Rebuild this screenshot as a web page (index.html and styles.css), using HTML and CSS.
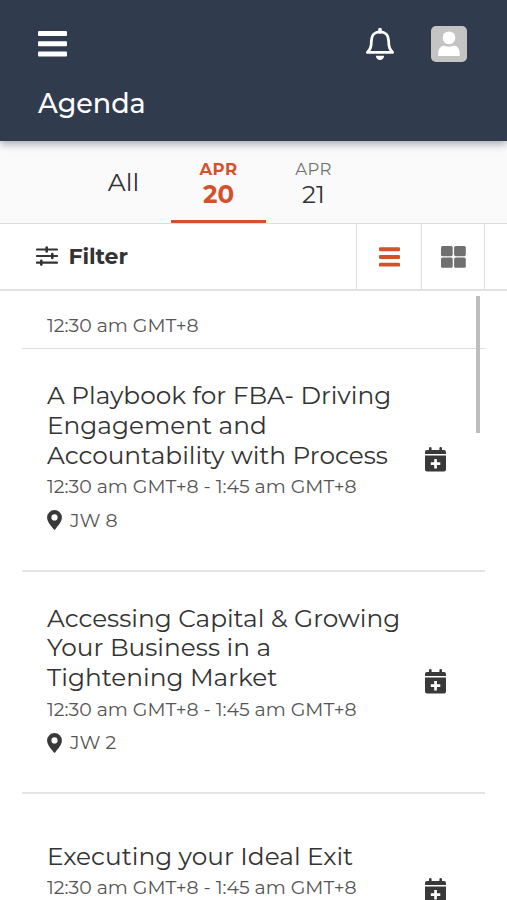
FILE: index.html
```html
<!DOCTYPE html>
<html lang="en">
<head>
    <meta charset="UTF-8">
    <meta name="viewport" content="width=device-width, initial-scale=1.0">
    <title>Agenda</title>
    <link rel="stylesheet" href="styles.css">
</head>
<body>

<header class="header">
    <div class="header-bar">
        <svg class="menu-icon" width="29" height="26" viewBox="0 0 29 26" fill="#fff">
            <rect width="29" height="5" rx="1"/>
            <rect y="10.3" width="29" height="5" rx="1"/>
            <rect y="20.6" width="29" height="5" rx="1"/>
        </svg>
        <svg class="bell-icon" width="30" height="34" viewBox="0 0 30 34">
            <path d="M15 4.8C9.6 4.8 6.4 8.6 6.4 13.6C6.4 20.5 5 22.6 2.4 25.4H27.6C25 22.6 23.6 20.5 23.6 13.6C23.6 8.6 20.4 4.8 15 4.8Z" fill="none" stroke="#fff" stroke-width="2.8" stroke-linejoin="round"/>
            <path d="M15 2.5V5" stroke="#fff" stroke-width="3.6" stroke-linecap="round"/>
            <path d="M10.8 28.7H19.2C19 31.3 17.2 33 15 33S11 31.3 10.8 28.7Z" fill="#fff"/>
        </svg>
        <svg class="avatar" width="36" height="36" viewBox="0 0 36 36">
            <rect width="36" height="36" rx="5" fill="#c4c4c4"/>
            <circle cx="18" cy="11.8" r="6.4" fill="#fff"/>
            <path d="M7.3 30V27C7.3 22.5 10 19.8 13.5 19.8Q18 21.6 22.5 19.8C26 19.8 28.7 22.5 28.7 27V30Z" fill="#fff"/>
        </svg>
    </div>
    <h1>Agenda</h1>
</header>

<nav class="tabs">
    <div class="tab all">All</div>
    <div class="tab active"><span class="month">APR</span><span class="date">20</span></div>
    <div class="tab"><span class="month">APR</span><span class="date">21</span></div>
</nav>

<div class="toolbar">
    <div class="filter">
        <svg width="22" height="20" viewBox="0 0 22 20" fill="none" stroke="#333" stroke-width="2.2" stroke-linecap="round">
            <path d="M1 3.5H21M1 10H21M1 16.7H21"/>
            <path d="M10.7 1.6V5.4M16.3 8.1V11.9M5.3 14.8V18.6" stroke-width="2.6"/>
        </svg>
        <span>Filter</span>
    </div>
    <div class="view list-view">
        <svg width="21" height="20" viewBox="0 0 21 20" fill="#d3522d">
            <rect y="0.3" width="21" height="3.9" rx="1.2"/>
            <rect y="8" width="21" height="3.9" rx="1.2"/>
            <rect y="15.7" width="21" height="3.9" rx="1.2"/>
        </svg>
    </div>
    <div class="view grid-view">
        <svg width="25" height="22" viewBox="0 0 25 22" fill="#707070">
            <rect width="11.7" height="10.2" rx="1.6"/>
            <rect x="13.1" width="11.7" height="10.2" rx="1.6"/>
            <rect y="11.6" width="11.7" height="10.2" rx="1.6"/>
            <rect x="13.1" y="11.6" width="11.7" height="10.2" rx="1.6"/>
        </svg>
    </div>
</div>

<svg class="symbols" width="0" height="0">
    <symbol id="pin" viewBox="0 0 15 20">
        <path fill-rule="evenodd" d="M7.5 0A7.4 7.4 0 0 0 .1 7.4C.1 11.7 3.6 15.2 6.7 19.2Q7.5 20.2 8.3 19.2C11.4 15.2 14.9 11.7 14.9 7.4A7.4 7.4 0 0 0 7.5 0ZM7.5 4.3A3.1 3.1 0 1 1 7.5 10.5A3.1 3.1 0 1 1 7.5 4.3Z"/>
    </symbol>
    <symbol id="calendar-plus" viewBox="0 0 21 25">
        <path d="M0 7V5Q0 3 2 3H4V1.2Q4 0 5.3 0T6.6 1.2V3H14.4V1.2Q14.4 0 15.7 0T17 1.2V3H19Q21 3 21 5V7Z"/>
        <path fill-rule="evenodd" d="M0 8.6H21V22.5Q21 24.6 19 24.6H2Q0 24.6 0 22.5ZM9.2 12V15.3H5.8V18H9.2V21.4H11.9V18H15.3V15.3H11.9V12Z"/>
    </symbol>
</svg>

<main class="agenda">
    <div class="scrollbar"></div>
    <div class="time-heading">12:30 am GMT+8</div>

    <div class="session">
        <div class="details">
            <h2>A Playbook for FBA- Driving<br>Engagement and<br>Accountability with Process</h2>
            <div class="time">12:30 am GMT+8 - 1:45 am GMT+8</div>
            <div class="room"><svg width="15" height="20"><use href="#pin"/></svg>JW 8</div>
        </div>
        <svg class="add" width="21" height="25"><use href="#calendar-plus"/></svg>
    </div>

    <div class="session">
        <div class="details">
            <h2>Accessing Capital &amp; Growing<br>Your Business in a<br>Tightening Market</h2>
            <div class="time">12:30 am GMT+8 - 1:45 am GMT+8</div>
            <div class="room"><svg width="15" height="20"><use href="#pin"/></svg>JW 2</div>
        </div>
        <svg class="add" width="21" height="25"><use href="#calendar-plus"/></svg>
    </div>

    <div class="session short">
        <div class="details">
            <h2>Executing your Ideal Exit</h2>
            <div class="time">12:30 am GMT+8 - 1:45 am GMT+8</div>
        </div>
        <svg class="add" width="21" height="25"><use href="#calendar-plus"/></svg>
    </div>
</main>

</body>
</html>
```
FILE: styles.css
```css
* {
    box-sizing: border-box;
}

body {
    margin: 0;
    height: 900px;
    overflow: hidden;
    display: flex;
    flex-direction: column;
    font-family: Montserrat, Inter, sans-serif;
    color: #333;
    background: #fff;
}

svg {
    display: block;
    flex-shrink: 0;
}

.header {
    position: relative;
    flex: none;
    height: 141px;
    padding: 26px 40px 0 38px;
    background: #303b4e;
    color: #fff;
    box-shadow: 0 3px 8px rgba(50, 40, 70, 0.4);
}

.header-bar {
    display: flex;
    align-items: center;
    height: 36px;
}

.bell-icon {
    margin-left: auto;
    margin-right: 36px;
}

.header h1 {
    margin: 26px 0 0;
    font-size: 27px;
    font-weight: 500;
    line-height: 32px;
}

.tabs {
    flex: none;
    display: flex;
    height: 83px;
    padding-left: 76px;
    background: #fafafa;
    border-bottom: 1px solid #ddd;
}

.tab {
    display: flex;
    flex-direction: column;
    align-items: center;
    width: 95px;
    padding-top: 18px;
    font-size: 23px;
}

.tab.all {
    padding-top: 26px;
    line-height: 30px;
    font-size: 25px;
}

.month {
    font-size: 16.5px;
    line-height: 20px;
    letter-spacing: 0.4px;
    color: #707070;
}

.date {
    font-size: 24.5px;
    line-height: 30px;
}

.tab.active {
    border-bottom: 3px solid #d3522d;
    color: #d3522d;
    font-weight: 700;
}

.tab.active .month {
    color: #d3522d;
}

.toolbar {
    flex: none;
    display: flex;
    height: 67px;
    border-bottom: 2px solid #e2e2e2;
}

.filter {
    flex: 1;
    display: flex;
    align-items: center;
    gap: 11px;
    padding: 0 0 1px 35.5px;
    font-size: 22px;
    font-weight: 700;
    letter-spacing: -0.1px;
    color: #333;
}

.view {
    display: flex;
    align-items: center;
    justify-content: center;
    width: 65px;
    border-left: 1px solid #ddd;
}

.grid-view {
    width: 64px;
    border-right: 1px solid #ddd;
    margin-right: 22px;
}

.symbols {
    position: absolute;
}

.agenda {
    position: relative;
    flex: 1;
    min-height: 0;
    overflow: hidden;
    padding: 0 22px;
}

.scrollbar {
    position: absolute;
    top: 5px;
    right: 27px;
    width: 4px;
    height: 137px;
    background: #bdbdbd;
}

.time-heading {
    height: 58px;
    padding: 23px 0 0 25px;
    border-bottom: 1px solid #ddd;
    font-size: 18.9px;
    line-height: 24px;
    color: #555;
}

.session {
    display: flex;
    align-items: center;
    justify-content: space-between;
    height: 222.5px;
    padding: 0 39.5px 0 25px;
    border-bottom: 2px solid #e4e4e4;
}

.session.short {
    height: 195px;
}

.session.short .details {
    padding-bottom: 35px;
}

.session h2 {
    margin: 0;
    font-size: 24.8px;
    font-weight: 400;
    line-height: 29.7px;
    white-space: nowrap;
}

.time {
    padding-top: 1px;
    font-size: 18.9px;
    line-height: 32px;
    color: #555;
    white-space: nowrap;
}

.room {
    display: flex;
    align-items: center;
    gap: 8px;
    height: 34px;
    font-size: 18.9px;
    color: #555;
}

.room svg,
.add {
    fill: #393939;
}
```
